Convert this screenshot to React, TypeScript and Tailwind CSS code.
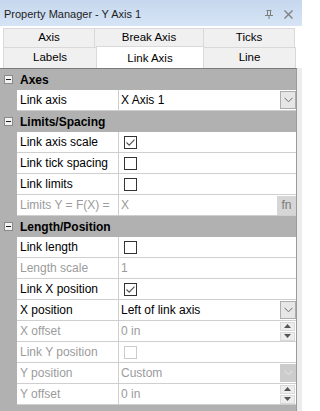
import React from "react";

type Prop = {
  kind: "prop";
  name: string;
  value?: string;
  disabled?: boolean;
  valueDisabled?: boolean;
  check?: "on" | "off" | "dis";
  control?: "drop" | "dropDis" | "spin" | "fn";
};
type Head = { kind: "head"; name: string };
type Row = Prop | Head;

const rows: Row[] = [
  { kind: "head", name: "Axes" },
  { kind: "prop", name: "Link axis", value: "X Axis 1", control: "drop" },
  { kind: "head", name: "Limits/Spacing" },
  { kind: "prop", name: "Link axis scale", check: "on" },
  { kind: "prop", name: "Link tick spacing", check: "off" },
  { kind: "prop", name: "Link limits", check: "off" },
  { kind: "prop", name: "Limits Y = F(X) =", value: "X", disabled: true, valueDisabled: true, control: "fn" },
  { kind: "head", name: "Length/Position" },
  { kind: "prop", name: "Link length", check: "off" },
  { kind: "prop", name: "Length scale", value: "1", disabled: true, valueDisabled: true },
  { kind: "prop", name: "Link X position", check: "on" },
  { kind: "prop", name: "X position", value: "Left of link axis", control: "drop" },
  { kind: "prop", name: "X offset", value: "0 in", disabled: true, valueDisabled: true, control: "spin" },
  { kind: "prop", name: "Link Y position", disabled: true, check: "dis" },
  { kind: "prop", name: "Y position", value: "Custom", disabled: true, valueDisabled: true, control: "dropDis" },
  { kind: "prop", name: "Y offset", value: "0 in", disabled: true, valueDisabled: true, control: "spin" },
];

const font = { fontFamily: '"Liberation Sans", Arial, sans-serif' };

function Chevron({ color }: { color: string }) {
  return (
    <svg width="9" height="6" viewBox="0 0 9 6">
      <path d="M0.5 0.8 L4.5 4.8 L8.5 0.8" fill="none" stroke={color} strokeWidth="1" />
    </svg>
  );
}

function CheckBox({ state }: { state: "on" | "off" | "dis" }) {
  const border = state === "dis" ? "border-[#cccccc]" : "border-[#333333]";
  return (
    <div className={`ml-[5px] w-[13px] h-[13px] border ${border} bg-white flex items-center justify-center`}>
      {state === "on" && (
        <svg width="11" height="11" viewBox="0 0 11 11">
          <path d="M1.5 5.5 L4.2 8.2 L9.5 2.6" fill="none" stroke="#555555" strokeWidth="1.2" />
        </svg>
      )}
    </div>
  );
}

function Control({ kind }: { kind: NonNullable<Prop["control"]> }) {
  if (kind === "drop")
    return (
      <div className="w-[16px] h-[18px] bg-[#e6e6e6] border border-[#adadad] flex items-center justify-center">
        <Chevron color="#6a6a6a" />
      </div>
    );
  if (kind === "dropDis")
    return (
      <div className="w-[16px] h-[18px] bg-[#cccccc] flex items-center justify-center">
        <Chevron color="#e6e6e6" />
      </div>
    );
  if (kind === "fn")
    return (
      <div className="w-[19px] h-[19px] bg-[#d6d6d6] flex items-center justify-center text-[12px] text-[#7a7a7a]">
        fn
      </div>
    );
  return (
    <div className="w-[15px] h-[19px] mr-[1px] flex flex-col gap-[1px]">
      {[0, 1].map((i) => (
        <div key={i} className="flex-1 bg-[#ededed] border border-[#d9d9d9] flex items-center justify-center">
          <svg width="7" height="4" viewBox="0 0 7 4">
            <path d={i === 0 ? "M3.5 0 L7 4 L0 4 Z" : "M0 0 L7 0 L3.5 4 Z"} fill="#555555" />
          </svg>
        </div>
      ))}
    </div>
  );
}

function GridRow({ row }: { row: Row }) {
  if (row.kind === "head")
    return (
      <div className="flex h-[21px] bg-[#b1b1b1]">
        <div className="w-[17px] flex items-center justify-center">
          <div className="w-[9px] h-[9px] border border-[#8a8a8a] bg-[#f2f2f2] flex items-center justify-center">
            <div className="w-[5px] h-px bg-[#222222]" />
          </div>
        </div>
        <div className="flex items-center pl-[3px] text-[12px] font-bold text-black">{row.name}</div>
      </div>
    );
  const nameColor = row.disabled ? "text-[#9b9b9b]" : "text-black";
  const valueColor = row.valueDisabled ? "text-[#9b9b9b]" : "text-black";
  return (
    <div className="flex h-[21px]">
      <div className="w-[17px] bg-[#b1b1b1]" />
      <div className="flex flex-1 bg-white border-b border-[#cfcfcf]">
        <div className={`w-[101px] flex items-center pl-[3px] text-[12px] whitespace-nowrap ${nameColor}`}>{row.name}</div>
        <div className="flex-1 flex items-center border-l border-[#cfcfcf]">
          {row.check ? (
            <CheckBox state={row.check} />
          ) : (
            <div className={`flex-1 pl-[2px] text-[12px] ${valueColor}`}>{row.value}</div>
          )}
          {row.control && <Control kind={row.control} />}
        </div>
      </div>
    </div>
  );
}

const tabBase = "h-full flex items-center justify-center border border-[#d9d9d9] text-[11.5px] text-black";

export default function App() {
  return (
    <div className="w-[302px] h-[411px] overflow-hidden bg-white flex flex-col" style={font}>
      {/* title bar */}
      <div className="h-[26px] flex items-center bg-gradient-to-b from-[#c6d7ee] to-[#d6e4f5] pl-[4px] pr-[9px]">
        <span className="text-[11px] text-[#1e1e1e] pt-[3px]">Property Manager - Y Axis 1</span>
        <div className="ml-auto flex items-center gap-[11px] pt-[3px]">
          <svg width="8" height="9" viewBox="0 0 8 9">
            <path d="M1.5 0.5 H6.5 M2.5 0.5 V5 M5.5 0.5 V5 M0 5.5 H8 M4 5.5 V9 M5.5 1 V4.5" stroke="#7e7e7e" strokeWidth="1" fill="none" />
          </svg>
          <svg width="9" height="9" viewBox="0 0 9 9">
            <path d="M0.5 0.5 L8.5 8.5 M8.5 0.5 L0.5 8.5" stroke="#7e7e7e" strokeWidth="1.3" />
          </svg>
        </div>
      </div>

      {/* tabs */}
      <div className="pt-[2px] pl-[3px] pr-[6px]">
        <div className="flex h-[20px]">
          <div className={`${tabBase} w-[92px] bg-[#f0f0f0]`}>Axis</div>
          <div className={`${tabBase} w-[110px] bg-[#f0f0f0] -ml-px`}>Break Axis</div>
          <div className={`${tabBase} w-[92px] bg-[#f0f0f0] -ml-px`}>Ticks</div>
        </div>
        <div className="flex h-[21px] -mt-px">
          <div className={`${tabBase} w-[94px] bg-[#f0f0f0] border-b-0`}>Labels</div>
          <div className="relative w-[108px] -ml-px">
            <div className="absolute -top-[1px] left-0 right-0 bottom-0 bg-white border-x border-t border-[#d9d9d9] flex items-start justify-center pt-[3px] text-[11.5px] text-black">
              Link Axis
            </div>
          </div>
          <div className={`${tabBase} w-[93px] bg-[#f0f0f0] -ml-px border-b-0`}>Line</div>
        </div>
      </div>

      {/* property grid */}
      <div className="flex-1 flex bg-[#ececec]">
        <div className="w-[297px] flex flex-col bg-[#b1b1b1] border-t border-[#7a7a7a] border-r border-r-[#9a9a9a]">
          {rows.map((r, i) => (
            <GridRow key={i} row={r} />
          ))}
        </div>
      </div>
    </div>
  );
}
